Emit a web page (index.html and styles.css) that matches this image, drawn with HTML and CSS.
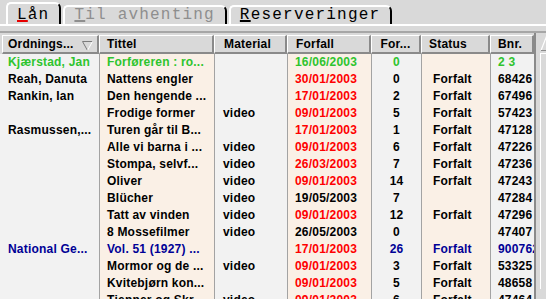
FILE: index.html
```html
<!DOCTYPE html>
<html lang="no">
<head>
<meta charset="utf-8">
<title>Lån</title>
<link rel="stylesheet" href="styles.css">
</head>
<body>
<div class="tabs">
  <div class="tab active"><span class="mn red">L</span>ån</div>
  <div class="tab disabled"><span class="mn">T</span>il avhenting</div>
  <div class="tab"><span class="mn">R</span>eserveringer</div>
</div>
<div class="page">
  <div class="rule"></div>
  <div class="listbox">
    <div class="table">
      <div class="row head">
        <div class="h h1"><span>Ordnings...</span>
          <svg class="sort" width="11" height="10" viewBox="0 0 11 10"><polyline points="0.5,0.5 10.5,0.5" stroke="#7c7c7c" fill="none"/><polyline points="0.5,0.5 5.5,9.5" stroke="#7c7c7c" fill="none"/><polyline points="10.5,0.5 5.5,9.5" stroke="#ffffff" fill="none"/></svg>
        </div>
        <div class="h">Tittel</div>
        <div class="h h3">Material</div>
        <div class="h h4">Forfall</div>
        <div class="h hn">For...</div>
        <div class="h">Status</div>
        <div class="h">Bnr.</div>
      </div>

      <div class="row g"><div class="c c1">Kjærstad, Jan</div><div class="c pe">Forføreren : ro...</div><div class="c c3"></div><div class="c pe">16/06/2003</div><div class="c n">0</div><div class="c pe s"></div><div class="c">2 3</div></div>
      <div class="row"><div class="c c1">Reah, Danuta</div><div class="c pe">Nattens engler</div><div class="c c3"></div><div class="c pe r">30/01/2003</div><div class="c n">0</div><div class="c pe s">Forfalt</div><div class="c">68426</div></div>
      <div class="row"><div class="c c1">Rankin, Ian</div><div class="c pe">Den hengende ...</div><div class="c c3"></div><div class="c pe r">17/01/2003</div><div class="c n">2</div><div class="c pe s">Forfalt</div><div class="c">67496</div></div>
      <div class="row"><div class="c c1"></div><div class="c pe">Frodige former</div><div class="c c3">video</div><div class="c pe r">09/01/2003</div><div class="c n">5</div><div class="c pe s">Forfalt</div><div class="c">57423</div></div>
      <div class="row"><div class="c c1">Rasmussen,...</div><div class="c pe">Turen går til B...</div><div class="c c3"></div><div class="c pe r">17/01/2003</div><div class="c n">1</div><div class="c pe s">Forfalt</div><div class="c">47128</div></div>
      <div class="row"><div class="c c1"></div><div class="c pe">Alle vi barna i ...</div><div class="c c3">video</div><div class="c pe r">09/01/2003</div><div class="c n">6</div><div class="c pe s">Forfalt</div><div class="c">47226</div></div>
      <div class="row"><div class="c c1"></div><div class="c pe">Stompa, selvf...</div><div class="c c3">video</div><div class="c pe r">26/03/2003</div><div class="c n">7</div><div class="c pe s">Forfalt</div><div class="c">47236</div></div>
      <div class="row"><div class="c c1"></div><div class="c pe">Oliver</div><div class="c c3">video</div><div class="c pe r">09/01/2003</div><div class="c n">14</div><div class="c pe s">Forfalt</div><div class="c">47243</div></div>
      <div class="row"><div class="c c1"></div><div class="c pe">Blücher</div><div class="c c3">video</div><div class="c pe">19/05/2003</div><div class="c n">7</div><div class="c pe s"></div><div class="c">47284</div></div>
      <div class="row"><div class="c c1"></div><div class="c pe">Tatt av vinden</div><div class="c c3">video</div><div class="c pe r">09/01/2003</div><div class="c n">12</div><div class="c pe s">Forfalt</div><div class="c">47296</div></div>
      <div class="row"><div class="c c1"></div><div class="c pe">8 Mossefilmer</div><div class="c c3">video</div><div class="c pe">26/05/2003</div><div class="c n">0</div><div class="c pe s"></div><div class="c">47407</div></div>
      <div class="row b"><div class="c c1">National Ge...</div><div class="c pe">Vol. 51 (1927) ...</div><div class="c c3"></div><div class="c pe r">17/01/2003</div><div class="c n">26</div><div class="c pe s">Forfalt</div><div class="c">900762</div></div>
      <div class="row"><div class="c c1"></div><div class="c pe">Mormor og de ...</div><div class="c c3">video</div><div class="c pe r">09/01/2003</div><div class="c n">3</div><div class="c pe s">Forfalt</div><div class="c">53325</div></div>
      <div class="row"><div class="c c1"></div><div class="c pe">Kvitebjørn kon...</div><div class="c c3"></div><div class="c pe r">09/01/2003</div><div class="c n">5</div><div class="c pe s">Forfalt</div><div class="c">48658</div></div>
      <div class="row"><div class="c c1"></div><div class="c pe">Tjenner og Skr...</div><div class="c c3">video</div><div class="c pe r">09/01/2003</div><div class="c n">6</div><div class="c pe s">Forfalt</div><div class="c">47464</div></div>
    </div>
    <div class="sb">
      <svg class="arrow" width="10" height="19" viewBox="0 0 10 19"><polygon points="5,17 12,-1 19,17" fill="#d9d9d9"/><line x1="5" y1="17.5" x2="12" y2="-0.5" stroke="#ffffff" stroke-width="1.2"/><line x1="5" y1="17.5" x2="10" y2="17.5" stroke="#8a8a8a" stroke-width="1"/></svg>
      <div class="thumb"></div>
    </div>
  </div>
</div>
</body>
</html>
```

FILE: styles.css
```css
* { box-sizing: border-box; }
html, body { margin: 0; padding: 0; }
body {
  width: 546px;
  height: 299px;
  overflow: hidden;
  background: #d9d9d9;
  font-family: "Liberation Sans", Arial, sans-serif;
  font-size: 12px;
  font-weight: bold;
  letter-spacing: 0.2px;
  color: #000;
}

/* notebook tabs */
.tabs {
  display: flex;
  align-items: flex-end;
  gap: 2px;
  height: 26px;
  padding-left: 6px;
  border-bottom: 2px solid #ffffff;
}
.tab {
  font-family: "Liberation Mono", "Courier New", monospace;
  font-weight: normal;
  font-size: 16px;
  letter-spacing: 1.2px;
  line-height: 17px;
  height: 19px;
  padding: 0 10px 0 9px;
  border-top: 2px solid #ffffff;
  border-left: 2px solid #ffffff;
  border-right: 2px solid #000000;
  border-radius: 5px 6px 0 0;
  white-space: nowrap;
}
.tab.active { height: 22px; padding-top: 3px; }
.tab.disabled { color: #8e8e8e; }
.mn {
  text-decoration: underline;
  text-decoration-thickness: 2px;
  text-underline-offset: 1px;
}
.mn.red { text-decoration-color: #e60000; }

/* page */
.page { padding-top: 5px; }
.rule { height: 2px; background: #a6a6a6; }
.listbox { display: flex; height: 266px; overflow: hidden; }
.table { flex: none; width: 534px; padding-top: 2px; }

.row {
  display: grid;
  grid-template-columns: 99px 115px 73px 84px 50px 69px 44px;
  height: 17px;
  line-height: 17px;
}
.row.head { height: 19px; }

.h {
  background: #d9d9d9;
  border-top: 1px solid #ffffff;
  border-left: 1px solid #ffffff;
  border-right: 2px solid #8a8a8a;
  border-bottom: 2px solid #8a8a8a;
  line-height: 16px;
  padding-left: 7px;
  white-space: nowrap;
  overflow: hidden;
}
.h1 {
  margin-left: 2px;
  padding-left: 5px;
  padding-right: 4px;
  display: flex;
  align-items: flex-start;
}
.sort { margin-left: auto; margin-top: 5px; flex: none; }
.h3 { padding-left: 9px; }
.h4 { padding-left: 8px; }
.hn { padding-left: 0; text-align: center; }

.c {
  background: #f2f2f2;
  border-left: 1px solid #a3a3a3;
  padding-left: 7px;
  white-space: nowrap;
  overflow: hidden;
}
.c1 { border-left: none; padding-left: 8px; }
.c3 { padding-left: 8px; }
.pe { background: #faf0e6; }
.n { padding-left: 0; text-align: center; }
.s { padding-left: 11px; }

.g .c { color: #2ec42e; }
.b .c { color: #000096; }
.row .c.r { color: #ff0000; }

/* scrollbar */
.sb {
  flex: none;
  width: 12px;
  border-left: 2px solid #8a8a8a;
  background: #d9d9d9;
  overflow: hidden;
}
.arrow { display: block; }
.thumb {
  margin: 1px 0 0 4px;
  height: 236px;
  border-left: 1px solid #ffffff;
  border-top: 1px solid #ffffff;
  background: #d9d9d9;
}
```
